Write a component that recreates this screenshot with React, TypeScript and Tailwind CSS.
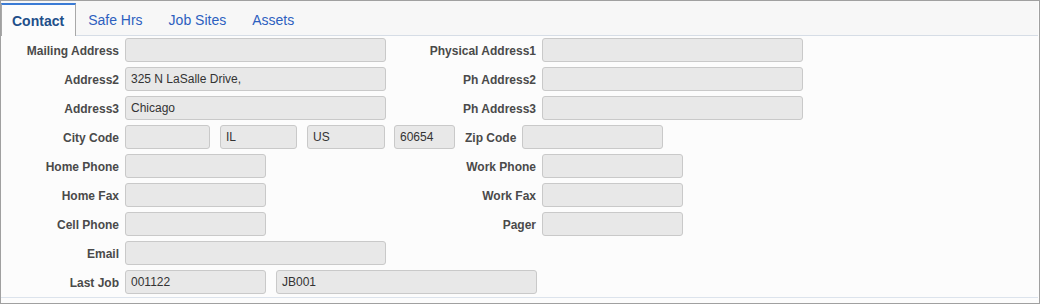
import React from 'react';

type FieldProps = { value?: string; w: string };

const Field = ({ value, w }: FieldProps) => (
  <div
    className={`${w} h-[24px] shrink-0 rounded-[3px] border border-[#c9c9c9] bg-[#e8e8e8] pl-[5px] text-[12px] leading-[22px] text-[#333333]`}
  >
    {value}
  </div>
);

const Label = ({ text, w }: { text: string; w: string }) => (
  <div className={`${w} shrink-0 pr-[6px] pt-[1px] text-right text-[12px] font-bold text-[#4a4a4a]`}>
    {text}
  </div>
);

const tabs = ['Safe Hrs', 'Job Sites', 'Assets'];

export default function App() {
  return (
    <div className="flex h-[304px] w-[1040px] flex-col border border-[#a0a0a0] bg-[#fcfcfc] font-['Liberation_Sans',Arial,sans-serif]">
      <div className="mr-[1px] flex h-[35px] shrink-0 border-b border-[#d6dde6] bg-[#f7f7f7] pt-[2px]">
        <div className="-mb-px flex h-[33px] items-center border-x border-t-2 border-x-[#a8a8a8] border-t-[#3a7bd5] bg-[#fcfcfc] pl-[10px] pr-[11px] pt-[1px] text-[14px] font-bold text-[#1f4f8a]">
          Contact
        </div>
        {tabs.map((t, i) => (
          <div
            key={t}
            className={`flex h-[32px] items-center pt-[3px] ${i === 0 ? 'pl-[12px] pr-[13px]' : 'px-[13px]'} text-[14px] text-[#2d5fbf]`}
          >
            {t}
          </div>
        ))}
      </div>

      <div className="mr-[1px] flex flex-col gap-[5px] border-b border-[#dce3ec] pb-[3px] pt-[2px]">
        <div className="flex items-center">
          <Label text="Mailing Address" w="w-[124px]" />
          <Field w="w-[261px]" />
          <Label text="Physical Address1" w="w-[156px]" />
          <Field w="w-[261px]" />
        </div>
        <div className="flex items-center">
          <Label text="Address2" w="w-[124px]" />
          <Field w="w-[261px]" value="325 N LaSalle Drive," />
          <Label text="Ph Address2" w="w-[156px]" />
          <Field w="w-[261px]" />
        </div>
        <div className="flex items-center">
          <Label text="Address3" w="w-[124px]" />
          <Field w="w-[261px]" value="Chicago" />
          <Label text="Ph Address3" w="w-[156px]" />
          <Field w="w-[261px]" />
        </div>
        <div className="flex items-center">
          <Label text="City Code" w="w-[124px]" />
          <Field w="w-[85px]" />
          <div className="ml-[10px]">
            <Field w="w-[77px]" value="IL" />
          </div>
          <div className="ml-[10px]">
            <Field w="w-[78px]" value="US" />
          </div>
          <div className="ml-[9px]">
            <Field w="w-[61px]" value="60654" />
          </div>
          <div className="ml-[10px] mr-[6px] pt-[1px] text-[12px] font-bold text-[#4a4a4a]">Zip Code</div>
          <Field w="w-[141px]" />
        </div>
        <div className="flex items-center">
          <Label text="Home Phone" w="w-[124px]" />
          <Field w="w-[141px]" />
          <div className="w-[120px] shrink-0" />
          <Label text="Work Phone" w="w-[156px]" />
          <Field w="w-[141px]" />
        </div>
        <div className="flex items-center">
          <Label text="Home Fax" w="w-[124px]" />
          <Field w="w-[141px]" />
          <div className="w-[120px] shrink-0" />
          <Label text="Work Fax" w="w-[156px]" />
          <Field w="w-[141px]" />
        </div>
        <div className="flex items-center">
          <Label text="Cell Phone" w="w-[124px]" />
          <Field w="w-[141px]" />
          <div className="w-[120px] shrink-0" />
          <Label text="Pager" w="w-[156px]" />
          <Field w="w-[141px]" />
        </div>
        <div className="flex items-center">
          <Label text="Email" w="w-[124px]" />
          <Field w="w-[261px]" />
        </div>
        <div className="flex items-center">
          <Label text="Last Job" w="w-[124px]" />
          <Field w="w-[141px]" value="001122" />
          <div className="ml-[10px]">
            <Field w="w-[261px]" value="JB001" />
          </div>
        </div>
      </div>
    </div>
  );
}
